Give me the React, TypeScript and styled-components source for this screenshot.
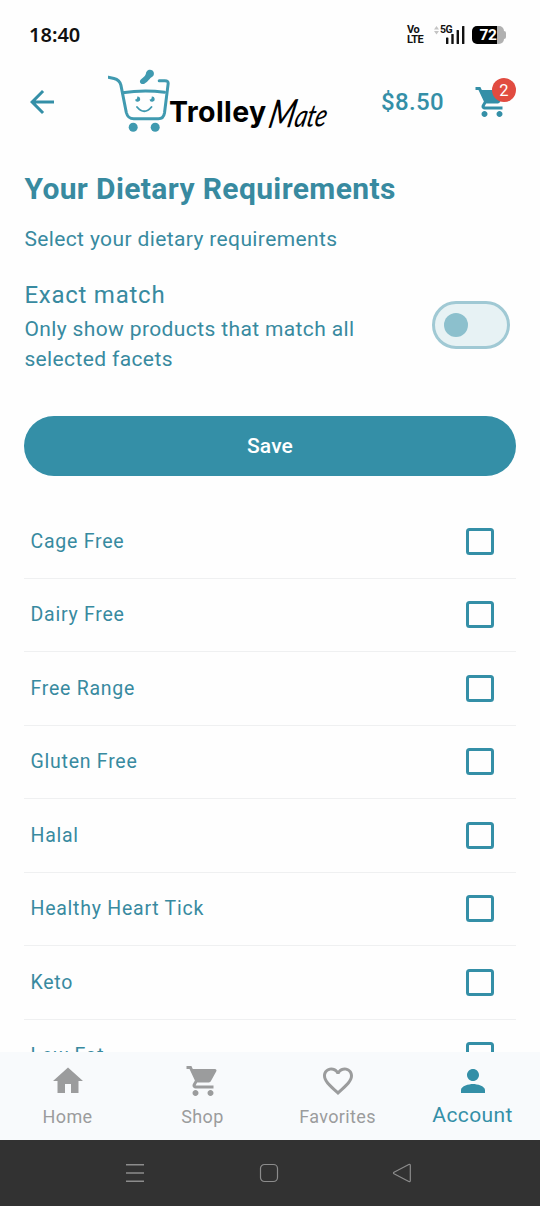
import React, { useState } from "react";
import styled, { createGlobalStyle } from "styled-components";
import {
  MdArrowBack,
  MdFavoriteBorder,
  MdHome,
  MdPerson,
  MdShoppingCart,
} from "react-icons/md";

const teal = "#348fa7";
const tealText = "#388aa0";

const GlobalStyle = createGlobalStyle`
  * { box-sizing: border-box; }
  body { margin: 0; background: #fff; }
  button { font: inherit; border: 0; background: none; padding: 0; color: inherit; }
  svg { display: block; flex: none; }
`;

const Screen = styled.div`
  width: 540px;
  height: 1206px;
  overflow: hidden;
  display: flex;
  flex-direction: column;
  background: #fefefe;
  color: ${tealText};
  font-family: Roboto, sans-serif;
`;

const StatusBar = styled.div`
  flex: none;
  height: 66px;
  padding: 4px 34px 0 29px;
  display: flex;
  align-items: center;
  color: #111;
`;

const Clock = styled.span`
  flex: 1;
  font: 600 20px/24px "Noto Sans", sans-serif;
`;

const VoLte = styled.span`
  width: 17px;
  margin-right: 10px;
  display: flex;
  flex-direction: column;
  font: 700 11px/10px Roboto, sans-serif;
  letter-spacing: -0.5px;
`;

const Signal = styled.span`
  position: relative;
  width: 32px;
  height: 18px;
  margin-right: 6px;
`;

const SignalLabel = styled.span`
  position: absolute;
  left: 6px;
  top: -1px;
  font: 700 10.5px/10px Roboto, sans-serif;
  letter-spacing: -0.6px;
`;

const Battery = styled.span`
  width: 34px;
  height: 18px;
  display: flex;
  align-items: center;
`;

const BatteryBody = styled.span`
  width: 32px;
  height: 18px;
  border-radius: 5px;
  text-align: center;
  background: linear-gradient(to right, #000 25px, #b1b1b1 25px);
  color: #fff;
  font: 700 15.5px/18px Roboto, sans-serif;
  letter-spacing: -0.4px;
`;

const BatteryTip = styled.span`
  width: 2px;
  height: 8px;
  border-radius: 0 2px 2px 0;
  background: #b1b1b1;
`;

const AppBar = styled.header`
  flex: none;
  height: 72px;
  padding: 0 30px 0 24px;
  display: flex;
  align-items: center;
  color: ${teal};
`;

const Logo = styled.div`
  width: 222px;
  height: 72px;
  margin-left: 46px;
  display: flex;
  color: #000;
`;

const LogoMark = styled.div`
  width: 70px;
  padding-left: 2px;
`;

const LogoName = styled.span`
  width: 98px;
  margin: 28px 0 0 -7px;
  font: 700 28.5px/36px Inter, sans-serif;
  letter-spacing: 0.4px;
`;

const LogoScript = styled.span`
  display: block;
  width: 60px;
  margin: 31px 0 0 0;
  font: italic 400 27px/36px Lato, sans-serif;
  letter-spacing: -0.2px;
  white-space: nowrap;
  transform: rotate(-2deg) skewX(-14deg) scale(0.9, 1.14);
  transform-origin: 0 75%;

  &::first-letter { font-size: 34px; }
`;

const Price = styled.span`
  margin-left: auto;
  margin-right: 30px;
  font-weight: 500;
  font-size: 24px;
  line-height: 36px;
  letter-spacing: 0.375px;
`;

const CartButton = styled.button`
  position: relative;
  width: 36px;
  height: 36px;
`;

const CartCount = styled.span`
  position: absolute;
  left: 18px;
  top: -6px;
  width: 24px;
  height: 24px;
  border-radius: 50%;
  background: #e14b40;
  color: #fff;
  font-size: 16.5px;
  line-height: 25px;
  text-align: center;
`;

const Content = styled.main`
  flex: 1;
  min-height: 0;
  overflow: hidden;
  padding: 31px 24px 0;
`;

const Title = styled.h1`
  margin: 0;
  padding-left: 0.4px;
  font-size: 30px;
  font-weight: 700;
  line-height: 40px;
  letter-spacing: 0.375px;
`;

const Body = styled.p`
  margin: 0;
  padding-left: 0.4px;
  font-size: 21px;
  line-height: 30px;
  letter-spacing: 0.375px;
`;

const Intro = styled(Body)`
  margin-top: 15px;
`;

const MatchRow = styled.section`
  display: flex;
  align-items: center;
  justify-content: space-between;
  margin-top: 23px;
  padding-right: 6px;
`;

const MatchText = styled.div`
  width: 350px;
`;

const MatchTitle = styled.h2`
  margin: 0 0 1px;
  padding-left: 0.4px;
  font-size: 24px;
  font-weight: 400;
  line-height: 36px;
  letter-spacing: 0.75px;
`;

const Toggle = styled.button<{ $on: boolean }>`
  width: 78px;
  height: 48px;
  margin-bottom: 1px;
  padding: 0 9px;
  display: flex;
  align-items: center;
  justify-content: ${(p) => (p.$on ? "flex-end" : "flex-start")};
  border: 3px solid #a0c9d4;
  border-radius: 24px;
  background: #e7f2f4;
`;

const Thumb = styled.span`
  width: 24px;
  height: 24px;
  border-radius: 50%;
  background: #8cc0cd;
`;

const SaveButton = styled.button`
  display: block;
  width: 100%;
  height: 60px;
  margin-top: 41.5px;
  border-radius: 30px;
  background: ${teal};
  color: #fff;
  font-size: 21px;
  font-weight: 500;
  letter-spacing: 0.15px;
`;

const List = styled.ul`
  list-style: none;
  margin: 29.5px 0 0;
  padding: 0;
`;

const Item = styled.li`
  height: 73.5px;
  padding: 0 22px 0 6.5px;
  display: flex;
  align-items: center;
  justify-content: space-between;
  border-bottom: 1.5px solid #eff0f1;
  font-size: 19.5px;
  letter-spacing: 0.75px;
`;

const CheckBox = styled.button<{ $checked: boolean }>`
  width: 28px;
  height: 27px;
  border: 3px solid ${teal};
  border-radius: 3.5px;
  background: ${(p) => (p.$checked ? teal : "transparent")};
`;

const TabBar = styled.nav`
  flex: none;
  height: 88px;
  display: grid;
  grid-template-columns: repeat(4, 1fr);
  background: #f8fafc;
`;

const Tab = styled.button<{ $active?: boolean }>`
  display: flex;
  flex-direction: column;
  align-items: center;
  padding-top: 11px;
  color: ${(p) => (p.$active ? teal : "#9b9c9d")};
`;

const TabLabel = styled.span<{ $active?: boolean }>`
  margin-top: ${(p) => (p.$active ? "3.5px" : "5.5px")};
  font-size: ${(p) => (p.$active ? 21 : 18)}px;
  line-height: 24px;
  letter-spacing: 0.375px;
`;

const SystemBar = styled.div`
  flex: none;
  height: 66px;
  display: flex;
  justify-content: center;
  align-items: center;
  gap: 113.5px;
  padding-right: 3px;
  background: #323232;
`;

function CartLogo() {
  return (
    <svg width="70" height="72" viewBox="0 0.5 70 72" fill="none" stroke="#409ab0" strokeLinecap="round" strokeLinejoin="round">
      <g strokeWidth="3">
        <path d="M.3 11.800 6 13c4 1 6 3 6.900 6.600L18.300 47q1.600 6.300 7.500 6.300h24.500q5.200 0 6.200-5.800L60.100 18.600q.5-3.400-3.300-3.400h-5.600" />
        <path d="M14.500 27.300q21-3.500 42-.6" />
      </g>
      <path d="M29 41.500q7.200 8.500 14.500 0" strokeWidth="1.900" />
      <g fill="#409ab0" stroke="none">
        <circle cx="25.200" cy="61.700" r="4.500" />
        <circle cx="47.200" cy="61.700" r="4.500" />
        <path d="M38.200 6.800a4 4 0 1 1 5.800 4.800c-2.600 1.400-3.600 4.600-7.600 6.600-3 1.500-5.800-1.400-3.800-3.900 2.200-2.500 5-2.700 5.600-7.500z" />
        <path d="M29.300 31a2.600 2.600 0 1 1-2.300 3q2.300.3 2.300-3zM43.800 31a2.600 2.600 0 1 1-2.300 3q2.300.3 2.300-3z" />
      </g>
    </svg>
  );
}

const options = [
  "Cage Free",
  "Dairy Free",
  "Free Range",
  "Gluten Free",
  "Halal",
  "Healthy Heart Tick",
  "Keto",
  "Low Fat",
];

const tabs = [
  { label: "Home", Icon: MdHome },
  { label: "Shop", Icon: MdShoppingCart },
  { label: "Favorites", Icon: MdFavoriteBorder },
  { label: "Account", Icon: MdPerson },
];

export default function App() {
  const [exact, setExact] = useState(false);
  const [selected, setSelected] = useState<string[]>([]);
  const toggle = (name: string) =>
    setSelected((s) => (s.includes(name) ? s.filter((n) => n !== name) : [...s, name]));

  return (
    <Screen>
      <GlobalStyle />
      <StatusBar>
        <Clock>18:40</Clock>
        <VoLte>
          <span>Vo</span>
          <span>LTE</span>
        </VoLte>
        <Signal>
          <svg width="32" height="18" viewBox="0 0 32 18" fill="#111">
            <path d="M0 3.500 2.500 0 5 3.500zM0 5 2.500 8.500 5 5z" fill="#c4c4c4" />
            <rect x="12" y="11.500" width="2.400" height="6.500" rx=".6" />
            <rect x="17.300" y="8" width="2.400" height="10" rx=".6" />
            <rect x="22.600" y="4" width="2.400" height="14" rx=".6" />
            <rect x="28" y="0" width="2.400" height="18" rx=".6" />
          </svg>
          <SignalLabel>5G</SignalLabel>
        </Signal>
        <Battery>
          <BatteryBody>72</BatteryBody>
          <BatteryTip />
        </Battery>
      </StatusBar>
      <AppBar>
        <MdArrowBack size={36} />
        <Logo>
          <LogoMark>
            <CartLogo />
          </LogoMark>
          <LogoName>Trolley</LogoName>
          <LogoScript>Mate</LogoScript>
        </Logo>
        <Price>$8.50</Price>
        <CartButton>
          <MdShoppingCart size={36} />
          <CartCount>2</CartCount>
        </CartButton>
      </AppBar>
      <Content>
        <Title>Your Dietary Requirements</Title>
        <Intro>Select your dietary requirements</Intro>
        <MatchRow>
          <MatchText>
            <MatchTitle>Exact match</MatchTitle>
            <Body>Only show products that match all selected facets</Body>
          </MatchText>
          <Toggle $on={exact} onClick={() => setExact(!exact)}>
            <Thumb />
          </Toggle>
        </MatchRow>
        <SaveButton>Save</SaveButton>
        <List>
          {options.map((name) => (
            <Item key={name}>
              {name}
              <CheckBox $checked={selected.includes(name)} onClick={() => toggle(name)} />
            </Item>
          ))}
        </List>
      </Content>
      <TabBar>
        {tabs.map(({ label, Icon }) => (
          <Tab key={label} $active={label === "Account"}>
            <Icon size={36} />
            <TabLabel $active={label === "Account"}>{label}</TabLabel>
          </Tab>
        ))}
      </TabBar>
      <SystemBar>
        <svg width="20" height="20" viewBox="0 0 20 20" stroke="#8c8c8c" strokeWidth="1.400">
          <path d="M1 1.800h18M1 10h18M1 18.200h18" />
        </svg>
        <svg width="20" height="20" viewBox="0 0 20 20" fill="none" stroke="#8c8c8c" strokeWidth="1.200">
          <rect x="1.500" y="1.500" width="17" height="17" rx="4" />
        </svg>
        <svg width="20" height="20" viewBox="0 0 20 20" fill="none" stroke="#8c8c8c" strokeWidth="1.200" strokeLinejoin="round">
          <path d="M2 9.200 16.800 1.500Q18.300 1 18.300 2.500v15q0 1.500-1.500 1L2 10.800q-1-.8 0-1.600z" />
        </svg>
      </SystemBar>
    </Screen>
  );
}
